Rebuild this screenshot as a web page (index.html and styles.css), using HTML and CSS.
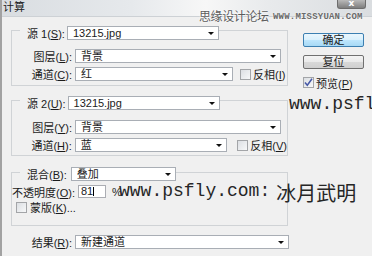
FILE: index.html
```html
<!doctype html>
<html>
<head>
  <meta charset="utf-8">
  <title>计算</title>
  <link rel="stylesheet" href="styles.css">
</head>
<body>
<div class="window">
  <div class="titlebar">
    <span class="title">计算</span>
    <div class="close">x</div>
  </div>

  <div class="main">
    <div class="left">
      <div class="group g1">
        <div class="legend">
          <span class="lbl-src">源 1(<u>S</u>):</span>
          <div class="select w152">13215.jpg<i class="arrow"></i></div>
        </div>
        <div class="row r1">
          <span class="lbl">图层(<u>L</u>):</span>
          <div class="select w206">背景<i class="arrow"></i></div>
        </div>
        <div class="row r2">
          <span class="lbl">通道(<u>C</u>):</span>
          <div class="select w158">红<i class="arrow"></i></div>
          <span class="check ch1"></span>
          <span class="check-text">反相(<u>I</u>)</span>
        </div>
      </div>

      <div class="group g2">
        <div class="legend">
          <span class="lbl-src">源 2(<u>U</u>):</span>
          <div class="select w152">13215.jpg<i class="arrow"></i></div>
        </div>
        <div class="row r1 r1b">
          <span class="lbl">图层(<u>Y</u>):</span>
          <div class="select w206">背景<i class="arrow"></i></div>
        </div>
        <div class="row r2">
          <span class="lbl">通道(<u>H</u>):</span>
          <div class="select w153">蓝<i class="arrow"></i></div>
          <span class="check ch2"></span>
          <span class="check-text">反相(<u>V</u>)</span>
        </div>
      </div>

      <div class="group g3">
        <div class="legend legend-blend">
          <span class="lbl-src lbl-blend">混合(<u>B</u>):</span>
          <div class="select w105">叠加<i class="arrow"></i></div>
        </div>
        <div class="row r-opacity">
          <span class="lbl">不透明度(<u>O</u>):</span>
          <div class="input">81<i class="caret"></i></div>
          <span class="pct">%</span>
        </div>
        <div class="row r-mask">
          <span class="check"></span>
          <span class="check-text">蒙版(<u>K</u>)...</span>
        </div>
      </div>

      <div class="row result">
        <span class="lbl">结果(<u>R</u>):</span>
        <div class="select w214">新建通道<i class="arrow"></i></div>
      </div>
    </div>

    <div class="right">
      <div class="btn btn-default">确定</div>
      <div class="btn">复位</div>
      <div class="row preview">
        <span class="check checked">
          <svg width="9" height="9" viewBox="0 0 9 9"><path d="M1 4.5 L3.3 7.3 L8 0.8" stroke="#4658a6" stroke-width="1.5" fill="none"/></svg>
        </span>
        <span class="check-text">预览(<u>P</u>)</span>
      </div>
    </div>
  </div>

  <!-- watermarks laid over the dialog -->
  <div class="wm-forum">思缘设计论坛</div>
  <div class="wm-site">WWW.MISSYUAN.COM</div>
  <div class="wm-psfly wm-right">www.psfly</div>
  <div class="wm-psfly wm-bottom"><span>www.psfly.com:</span><span class="wm-cjk">冰月武明</span></div>
</div>
</body>
</html>
```

FILE: styles.css
```css
body {
  margin: 0;
  font-family: "Liberation Sans", "Noto Sans CJK SC", sans-serif;
  font-size: 11px;
  color: #1b1b1b;
  background-color: #f0f0f0;
}

u {
  text-decoration: underline;
}

.window {
  position: relative;
  width: 370px;
  height: 256px;
  border-left: 2px solid #a2a2a2;
  background-color: #f0f0f0;
  overflow: hidden;
}

.titlebar {
  height: 16px;
  border-bottom: 1px solid #cdd1d5;
  background: linear-gradient(to right, #d9dde1 0%, #e6e9ec 35%, #f7f7f7 55%, #e8eaec 72%, #dadde0 100%);
  display: flex;
  justify-content: space-between;
  align-items: flex-start;
}

.title {
  margin-left: 1px;
  line-height: 15px;
  color: #202020;
}

.close {
  width: 29px;
  height: 9px;
  margin-right: 6px;
  box-sizing: border-box;
  border: 1px solid #6d6d6d;
  border-top: none;
  border-radius: 0 0 3px 3px;
  background: linear-gradient(#b9b9b9, #7e7e7e);
  color: #fff;
  font: bold 9px/7px "DejaVu Sans", sans-serif;
  text-align: center;
}

.main {
  display: flex;
}

.left {
  width: 290px;
}

.group {
  margin-left: 9px;
  width: 275px;
  border: 1px solid #d0d3d6;
}

.g1 {
  margin-top: 13px;
  padding-bottom: 4px;
}

.g2 {
  margin-top: 14px;
  padding-bottom: 3px;
}

.g3 {
  margin-top: 16px;
  padding-bottom: 12px;
}

.legend {
  display: flex;
  align-items: center;
  width: fit-content;
  height: 14px;
  margin-top: -5px;
  margin-left: 8px;
  padding-left: 7px;
  background-color: #f0f0f0;
}

.legend-blend {
  margin-top: -6px;
}

.lbl-src {
  margin-right: 2px;
  white-space: nowrap;
}

.lbl-blend {
  margin-right: 4px;
}

.row {
  display: flex;
  align-items: center;
  height: 14px;
}

.r1 {
  margin-top: 9px;
}

.r1b {
  margin-top: 10px;
}

.r2 {
  margin-top: 4px;
}

.lbl {
  width: 60px;
  margin-right: 3px;
  text-align: right;
  white-space: nowrap;
}

.select {
  box-sizing: border-box;
  height: 14px;
  padding: 0 4px 0 5px;
  border: 1px solid #a9aeb5;
  background-color: #fff;
  display: flex;
  justify-content: space-between;
  align-items: center;
  line-height: 12px;
  white-space: nowrap;
}

.arrow {
  width: 0;
  height: 0;
  border-left: 3px solid transparent;
  border-right: 3px solid transparent;
  border-top: 3px solid #111;
}

.w105 { width: 105px; }
.w152 { width: 152px; }
.w153 { width: 153px; }
.w158 { width: 158px; }
.w206 { width: 206px; }
.w214 { width: 214px; }

.check {
  box-sizing: border-box;
  width: 11px;
  height: 11px;
  flex-shrink: 0;
  border: 1px solid #a3a5a8;
  background: linear-gradient(135deg, #dcdfe3, #f7f8f9);
  display: flex;
  align-items: center;
  justify-content: center;
}

.ch1 {
  margin-left: 7px;
}

.ch2 {
  margin-left: 10px;
}

.check-text {
  margin-left: 2px;
  white-space: nowrap;
}

.r-opacity {
  margin-top: 4px;
  height: 13px;
}

.input {
  box-sizing: border-box;
  width: 28px;
  height: 13px;
  margin-left: 3px;
  padding-left: 2px;
  border: 1px solid #abadb3;
  background-color: #fff;
  display: flex;
  align-items: center;
  line-height: 11px;
}

.caret {
  width: 1px;
  height: 9px;
  background-color: #000;
}

.pct {
  margin-left: 6px;
}

.r-mask {
  margin-top: 3px;
  margin-left: 4px;
  height: 12px;
}

.r-mask .check-text {
  margin-left: 3px;
}

.result {
  margin-top: 9px;
  margin-left: 10px;
}

.right {
  padding-top: 16px;
  padding-left: 11px;
}

.btn {
  box-sizing: border-box;
  width: 61px;
  height: 14px;
  margin-bottom: 8px;
  border: 1px solid #707070;
  border-radius: 2px;
  background: linear-gradient(#f4f4f4 0%, #e9e9e9 50%, #d8d8d8 51%, #cfcfcf 100%);
  text-align: center;
  line-height: 12px;
  color: #222;
}

.btn-default {
  border-color: #3c7fb1;
  background: linear-gradient(#eaf6fd 0%, #d9f0fc 50%, #bee6fd 51%, #a7d9f5 100%);
}

.preview {
  height: 11px;
}

.wm-forum {
  position: absolute;
  left: 197px;
  top: 9px;
  font-family: "Noto Sans CJK SC", sans-serif;
  font-size: 12px;
  line-height: 14px;
  letter-spacing: -0.4px;
  color: #5c5c5c;
  text-shadow: 0 0 2px #fff, 0 0 2px #fff;
}

.wm-site {
  position: absolute;
  left: 271px;
  top: 12px;
  font: bold 9px/10px "Liberation Mono", monospace;
  letter-spacing: 0.2px;
  color: #6a6a6a;
  text-shadow: 0 0 2px #fff;
}

.wm-psfly {
  position: absolute;
  display: flex;
  align-items: flex-start;
  font: 18px/18px "Liberation Mono", monospace;
  color: #262626;
  white-space: nowrap;
}

.wm-right {
  left: 287px;
  top: 95px;
}

.wm-bottom {
  left: 117px;
  top: 182px;
}

.wm-cjk {
  margin-left: 6px;
  margin-top: 1px;
  font-family: "Noto Sans CJK SC", sans-serif;
  font-size: 20px;
  line-height: 20px;
}
```
